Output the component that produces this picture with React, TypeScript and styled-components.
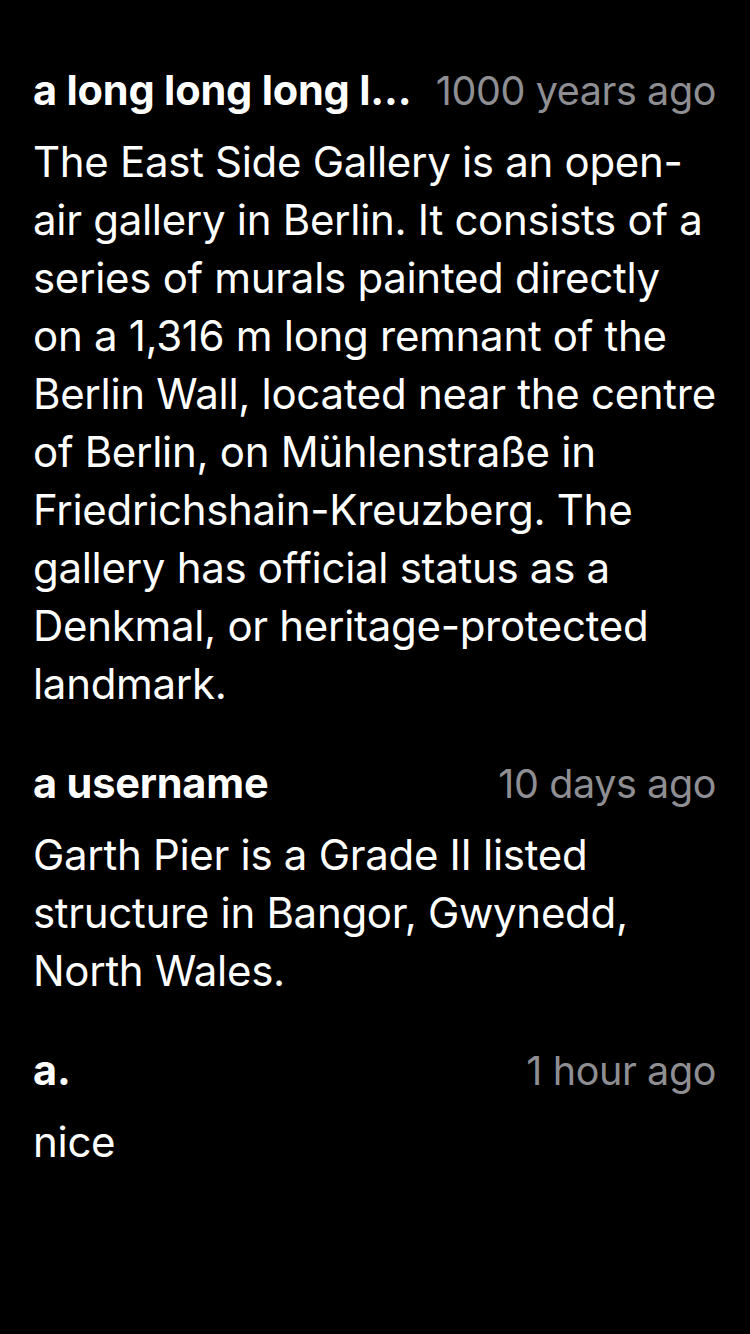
import React from "react";
import styled, { createGlobalStyle } from "styled-components";

const GlobalStyle = createGlobalStyle`
  html, body {
    margin: 0;
    padding: 0;
    background: #000;
  }
  body {
    font-family: Inter, "Noto Sans", "Liberation Sans", sans-serif;
    -webkit-font-smoothing: antialiased;
  }
`;

type Comment = {
  id: number;
  user: string;
  time: string;
  text: string;
};

const comments: Comment[] = [
  {
    id: 1,
    user: "a long long long l...",
    time: "1000 years ago",
    text: "The East Side Gallery is an open-air gallery in Berlin. It consists of a series of murals painted directly on a 1,316 m long remnant of the Berlin Wall, located near the centre of Berlin, on Mühlenstraße in Friedrichshain-Kreuzberg. The gallery has official status as a Denkmal, or heritage-protected landmark.",
  },
  {
    id: 2,
    user: "a username",
    time: "10 days ago",
    text: "Garth Pier is a Grade II listed structure in Bangor, Gwynedd, North Wales.",
  },
  {
    id: 3,
    user: "a.",
    time: "1 hour ago",
    text: "nice",
  },
];

const CommentList = () => {
  return (
    <Container>
      <GlobalStyle />
      <List>
        {comments.map((c) => (
          <Item key={c.id}>
            <Header>
              <Username>{c.user}</Username>
              <Time>{c.time}</Time>
            </Header>
            <Body>{c.text}</Body>
          </Item>
        ))}
      </List>
    </Container>
  );
};

export default CommentList;

const Container = styled.div`
  width: 100%;
  min-height: 1334px;
  background-color: #000;
  box-sizing: border-box;
  padding: 66px 34px 0 33px;
`;

const List = styled.div`
  display: flex;
  flex-direction: column;
  gap: 46px;
`;

const Item = styled.div`
  display: flex;
  flex-direction: column;
  gap: 19px;
`;

const Header = styled.div`
  display: flex;
  justify-content: space-between;
  align-items: baseline;
  gap: 24px;
  height: 48px;
`;

const Username = styled.span`
  color: #fff;
  font-size: 41.5px;
  line-height: 48px;
  font-weight: 700;
  white-space: nowrap;
  letter-spacing: -0.2px;
`;

const Time = styled.span`
  color: #8e8e93;
  font-size: 39.5px;
  line-height: 48px;
  font-weight: 400;
  white-space: nowrap;
  letter-spacing: -0.4px;
`;

const Body = styled.p`
  margin: 0 -2px 0 0;
  color: #fff;
  font-size: 42px;
  line-height: 58px;
  font-weight: 400;
  letter-spacing: -0.3px;
`;
